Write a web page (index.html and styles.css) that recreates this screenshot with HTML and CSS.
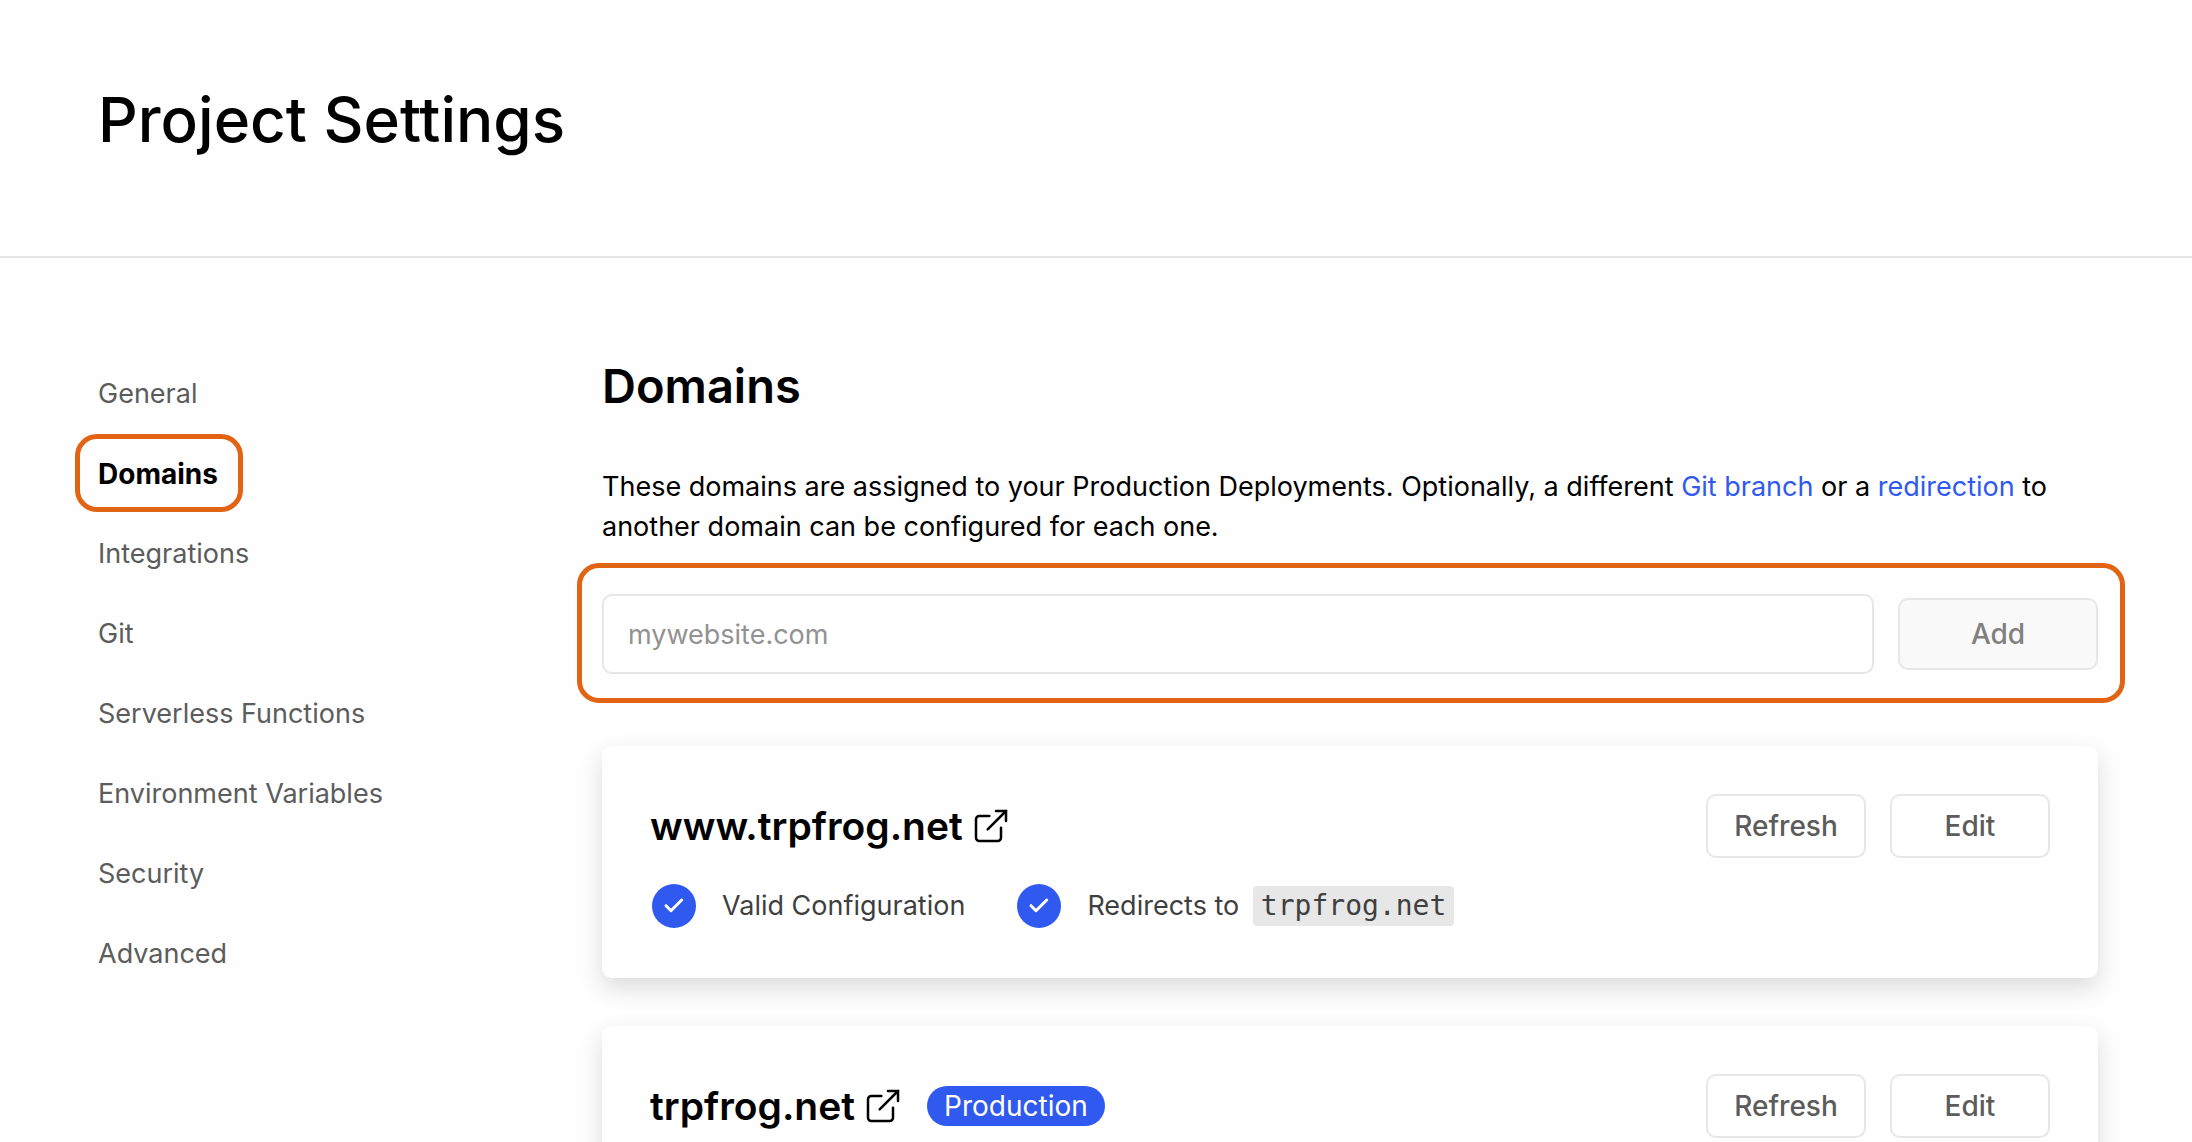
FILE: index.html
```html
<!DOCTYPE html>
<html lang="en">
<head>
<meta charset="UTF-8">
<meta name="viewport" content="width=device-width, initial-scale=1.0">
<title>Project Settings</title>
<link rel="stylesheet" href="styles.css">
</head>
<body>

<header class="page-header">
    <h1>Project Settings</h1>
</header>

<div class="layout">
    <nav class="side-nav">
        <a href="#general">General</a>
        <a href="#domains" class="active">Domains</a>
        <a href="#integrations">Integrations</a>
        <a href="#git">Git</a>
        <a href="#functions">Serverless Functions</a>
        <a href="#environment">Environment Variables</a>
        <a href="#security">Security</a>
        <a href="#advanced">Advanced</a>
    </nav>

    <main class="content">
        <h2>Domains</h2>
        <p class="intro">These domains are assigned to your Production Deployments. Optionally, a different <a href="#git-branch">Git branch</a> or a <a href="#redirection">redirection</a> to another domain can be configured for each one.</p>

        <form class="add-form">
            <input type="text" class="domain-input" placeholder="mywebsite.com" aria-label="Domain">
            <button type="button" class="add-button" disabled>Add</button>
        </form>

        <section class="card">
            <div class="card-head">
                <a class="domain-link" href="#www">
                    www.trpfrog.net
                    <svg class="external" viewBox="0 0 24 24" aria-hidden="true">
                        <path d="M18 13v6a2 2 0 0 1-2 2H5a2 2 0 0 1-2-2V8a2 2 0 0 1 2-2h6"/>
                        <path d="M15 3h6v6"/>
                        <path d="M10 14L21 3"/>
                    </svg>
                </a>
                <div class="actions">
                    <button type="button">Refresh</button>
                    <button type="button">Edit</button>
                </div>
            </div>
            <div class="status-row">
                <div class="status">
                    <svg class="check" viewBox="0 0 24 24" aria-hidden="true">
                        <circle cx="12" cy="12" r="11"/>
                        <path d="M8 11.857l2.5 2.5L15.857 9"/>
                    </svg>
                    <span>Valid Configuration</span>
                </div>
                <div class="status">
                    <svg class="check" viewBox="0 0 24 24" aria-hidden="true">
                        <circle cx="12" cy="12" r="11"/>
                        <path d="M8 11.857l2.5 2.5L15.857 9"/>
                    </svg>
                    <span>Redirects to <code>trpfrog.net</code></span>
                </div>
            </div>
        </section>

        <section class="card">
            <div class="card-head">
                <a class="domain-link" href="#root">
                    trpfrog.net
                    <svg class="external" viewBox="0 0 24 24" aria-hidden="true">
                        <path d="M18 13v6a2 2 0 0 1-2 2H5a2 2 0 0 1-2-2V8a2 2 0 0 1 2-2h6"/>
                        <path d="M15 3h6v6"/>
                        <path d="M10 14L21 3"/>
                    </svg>
                </a>
                <span class="badge">Production</span>
                <div class="actions">
                    <button type="button">Refresh</button>
                    <button type="button">Edit</button>
                </div>
            </div>
        </section>
    </main>
</div>

</body>
</html>
```
FILE: styles.css
```css
/* Overall Style */
* {
    box-sizing: border-box;
}
body {
    margin: 0;
    font-family: Inter, "Liberation Sans", sans-serif;
    font-size: 27px;
    line-height: 40px;
    background: #fefefe;
    color: #000;
}
a {
    color: inherit;
    text-decoration: none;
}
button, input {
    font: inherit;
}

/* Header */
.page-header {
    padding: 80px 98px 96px;
    border-bottom: 2px solid #e7e7e7;
}
h1 {
    margin: 0;
    font-size: 62px;
    line-height: 80px;
    font-weight: 500;
}

/* Two columns */
.layout {
    display: grid;
    grid-template-columns: 480px 1fr;
    gap: 24px;
    padding: 96px 94px 0 98px;
}
.side-nav {
    display: flex;
    flex-direction: column;
    align-items: flex-start;
    gap: 2px;
    color: #5c5c5c;
}
.side-nav a {
    padding: 15px 20px 13px 18px;
    margin-left: -23px;
    border: 5px solid transparent;
    border-radius: 22px;
}
.side-nav .active {
    border-color: #e26313;
    color: #000;
    font-size: 28px;
    font-weight: 700;
}

/* Content */
h2 {
    margin: 0 0 53px;
    padding-top: 4px;
    font-size: 47px;
    line-height: 56px;
    font-weight: 600;
}
.intro {
    margin: 0;
}
.intro a {
    color: #3059ef;
}

/* Add domain */
.add-form {
    display: flex;
    align-items: center;
    gap: 24px;
    margin: 16px -27px 43px -25px;
    padding: 26px 22px 24px 20px;
    border: 5px solid #e26313;
    border-radius: 22px;
}
.domain-input {
    flex: 1;
    min-width: 0;
    height: 80px;
    padding: 0 24px;
    border: 2px solid #e7e7e7;
    border-radius: 10px;
    background: #fff;
}
.domain-input::placeholder {
    color: #929292;
}
.add-button {
    width: 200px;
    height: 72px;
    border: 2px solid #e7e7e7;
    border-radius: 10px;
    background: #f9f9f9;
    color: #808080;
    font-size: 28px;
    font-weight: 500;
}

/* Domain cards */
.card {
    margin-bottom: 48px;
    padding: 48px;
    border-radius: 10px;
    background: #fff;
    box-shadow: 0 10px 24px rgba(0, 0, 0, 0.14);
}
.card-head {
    display: flex;
    align-items: center;
    gap: 24px;
}
.domain-link {
    display: flex;
    align-items: center;
    gap: 8px;
    font-size: 39px;
    font-weight: 600;
}
.external {
    width: 40px;
    height: 40px;
    fill: none;
    stroke: #000;
    stroke-width: 1.5;
    stroke-linecap: round;
    stroke-linejoin: miter;
}
.actions {
    display: flex;
    gap: 24px;
    margin-left: auto;
}
.actions button {
    width: 160px;
    height: 64px;
    padding: 0;
    border: 2px solid #e7e7e7;
    border-radius: 10px;
    background: #fff;
    color: #5c5c5c;
    font-size: 28px;
    font-weight: 500;
    cursor: pointer;
}
.badge {
    padding: 0 17px;
    border-radius: 20px;
    background: #3059ef;
    color: #fff;
    font-size: 28px;
}

/* Status line */
.status-row {
    display: flex;
    gap: 50px;
    margin-top: 24px;
    color: #3f3f3f;
}
.status {
    display: flex;
    align-items: center;
    gap: 24px;
    height: 48px;
}
.check {
    width: 48px;
    height: 48px;
    fill: none;
}
.check circle {
    fill: #3059ef;
}
.check path {
    stroke: #fff;
    stroke-width: 1.5;
    stroke-linecap: round;
    stroke-linejoin: round;
}
code {
    display: inline-block;
    margin-left: 6px;
    padding: 0 8px;
    border-radius: 4px;
    background: #e7e7e7;
    font-family: "DejaVu Sans Mono", monospace;
    font-size: 28px;
}
```
